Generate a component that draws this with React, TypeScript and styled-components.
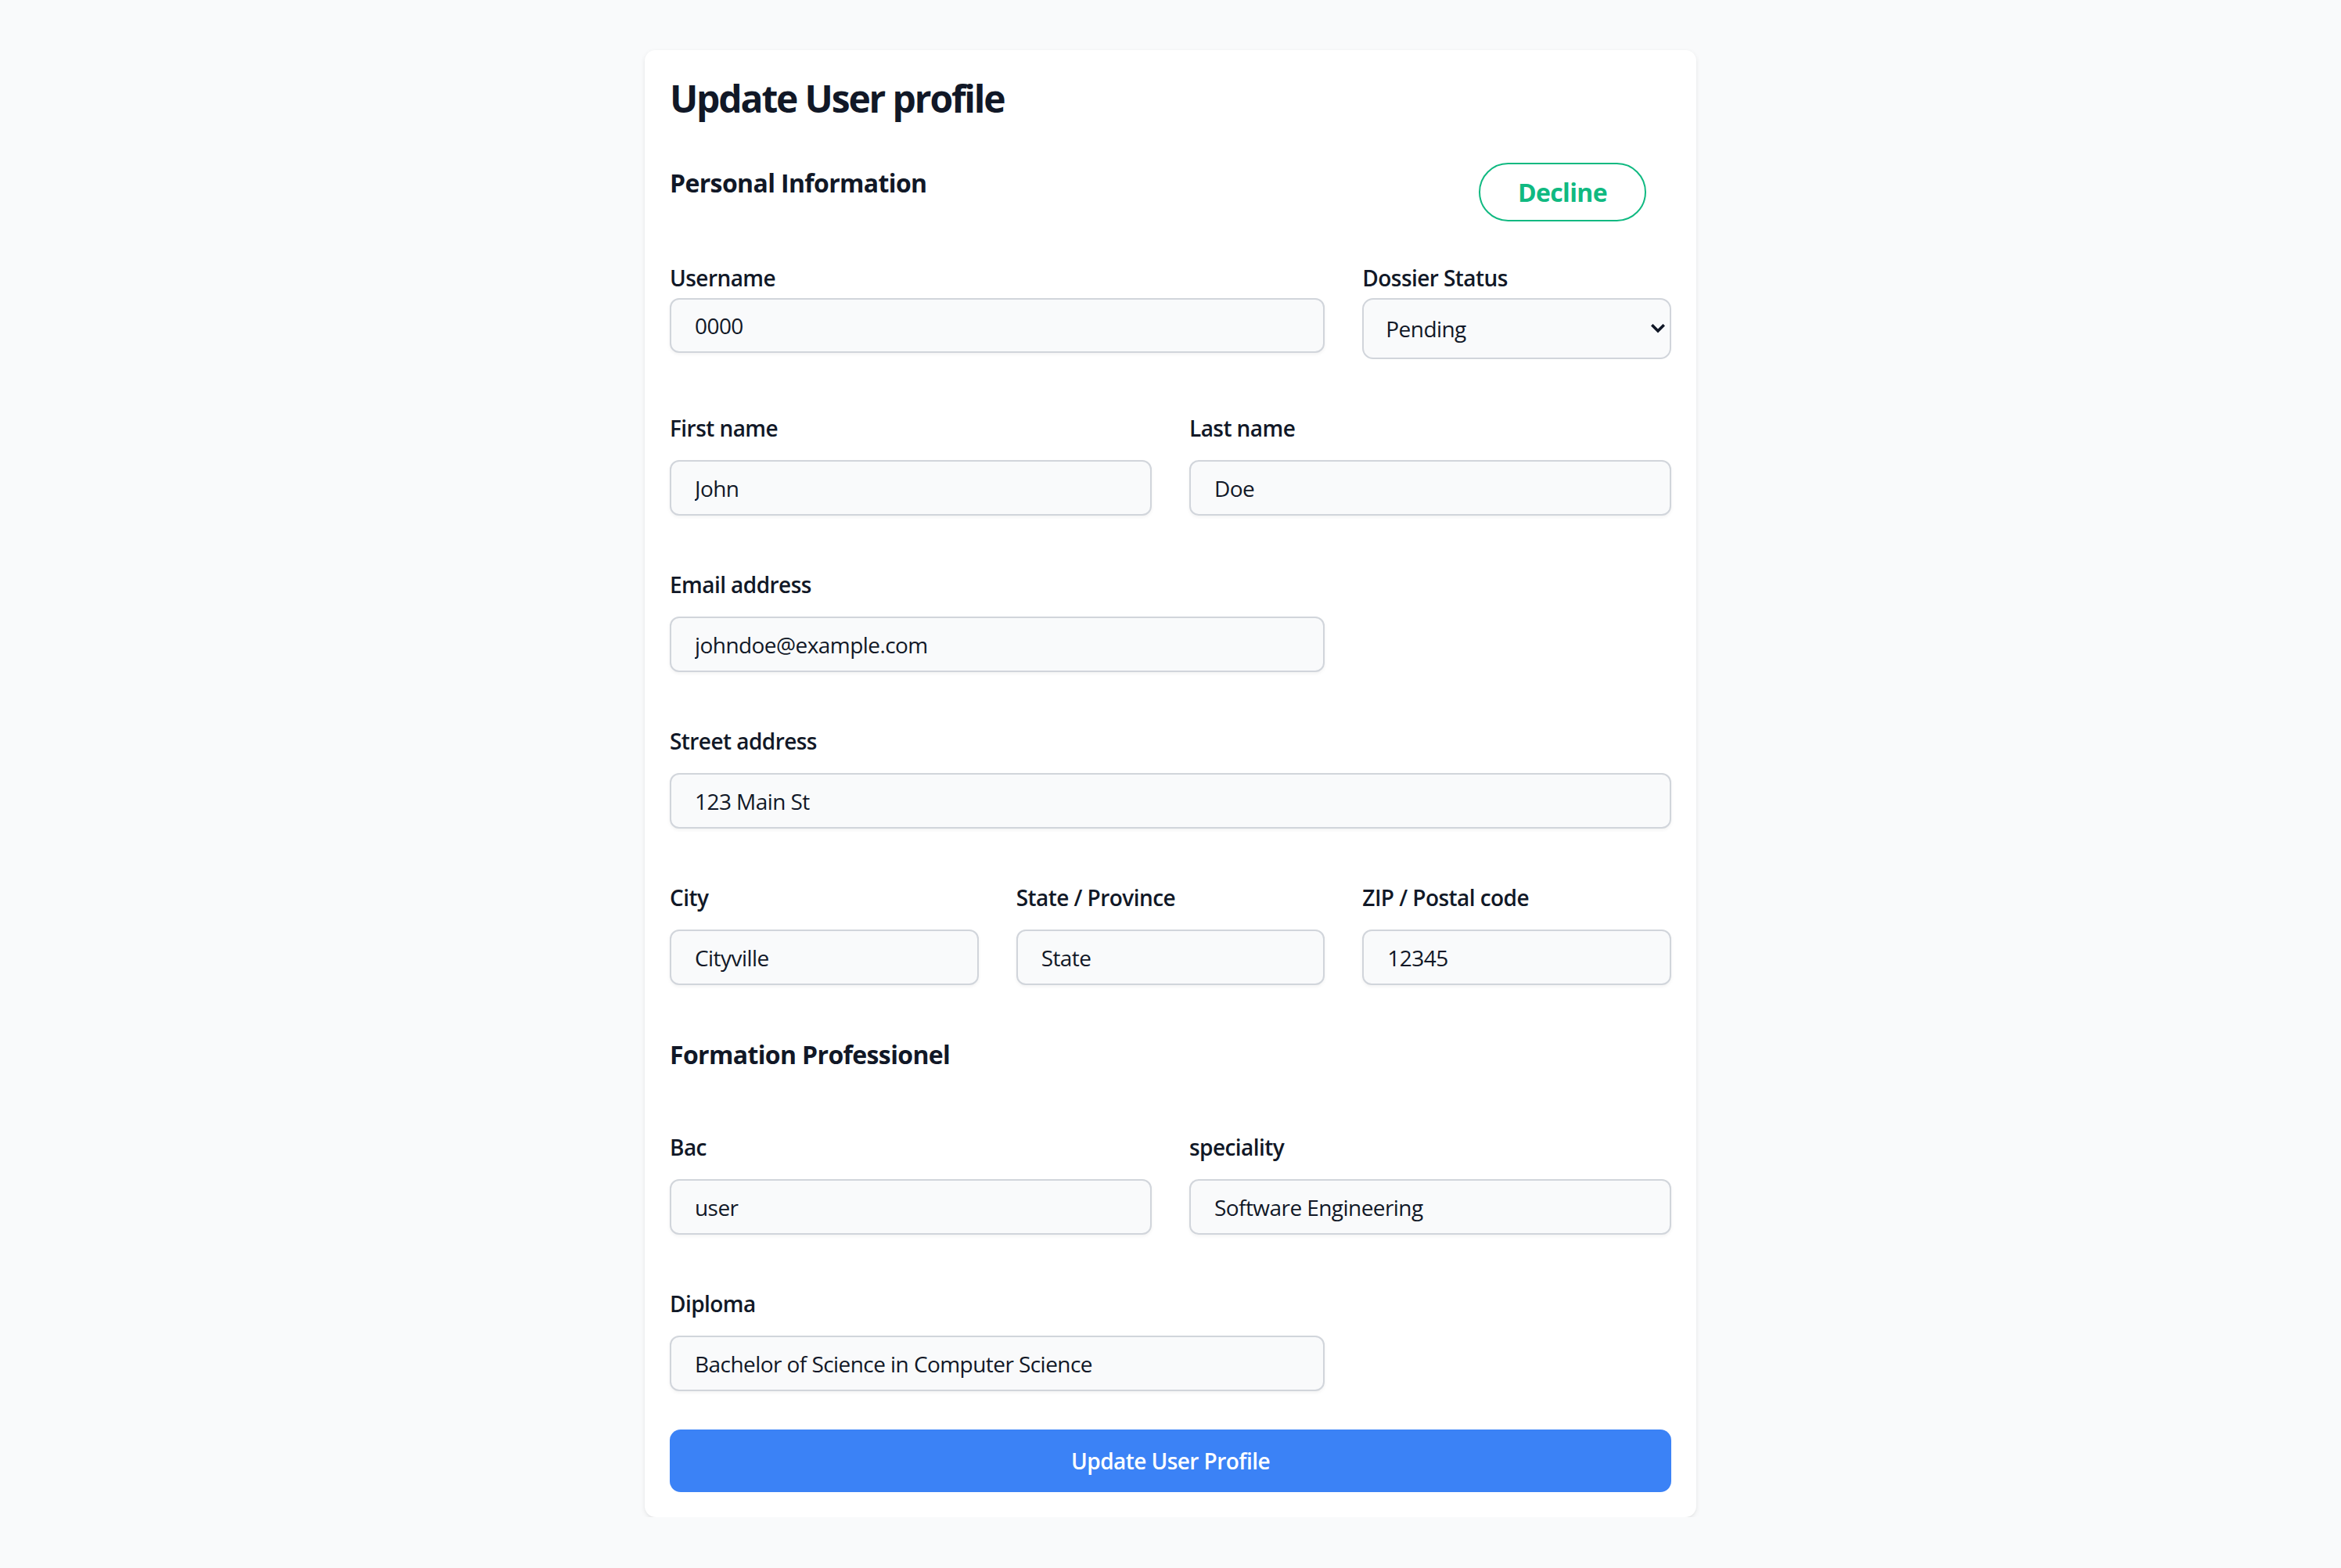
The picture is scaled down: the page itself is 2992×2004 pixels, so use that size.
import React from "react";
import styled, { createGlobalStyle } from "styled-components";

const GlobalStyle = createGlobalStyle`
  html, body {
    margin: 0;
    padding: 0;
    background: #f9fafb;
  }
  body {
    font-family: "Open Sans", "Noto Sans", sans-serif;
    color: #111827;
    -webkit-font-smoothing: antialiased;
  }
  *, *::before, *::after {
    box-sizing: border-box;
  }
`;

const Page = styled.main`
  padding-top: 64px;
  display: flex;
  justify-content: center;
  align-items: flex-start;
`;

const Card = styled.form`
  width: 1344px;
  background: #ffffff;
  border-radius: 14px;
  box-shadow: 0 2px 6px rgba(0, 0, 0, 0.08), 0 2px 4px -2px rgba(0, 0, 0, 0.08);
  padding: 32px 32px 32px;
  display: flex;
  flex-direction: column;
`;

const Title = styled.h1`
  margin: 2px 0 0;
  font-size: 48px;
  line-height: 56px;
  font-weight: 700;
  letter-spacing: -0.045em;
  color: #111827;
`;

const HeaderRow = styled.div`
  display: flex;
  justify-content: space-between;
  align-items: flex-start;
  margin-top: 52px;
`;

const SectionTitle = styled.h2<{ $mt?: number }>`
  margin: ${(p) => p.$mt ?? 0}px 0 0;
  font-size: 32px;
  line-height: 56px;
  font-weight: 700;
  letter-spacing: -0.02em;
  color: #111827;
`;

const DeclineButton = styled.button`
  margin: 2px 32px 0 0;
  width: 214px;
  height: 75px;
  border: 2px solid #10b981;
  border-radius: 999px;
  background: #ffffff;
  color: #10b981;
  font-family: "Open Sans", sans-serif;
  font-size: 32px;
  font-weight: 700;
  letter-spacing: -0.02em;
  cursor: pointer;
`;

const Grid = styled.div<{ $mt: number }>`
  display: grid;
  grid-template-columns: repeat(6, minmax(0, 1fr));
  column-gap: 48px;
  row-gap: 64px;
  margin-top: ${(p) => p.$mt}px;
`;

const Field = styled.div<{ $span: number }>`
  grid-column: span ${(p) => p.$span};
  display: flex;
  flex-direction: column;
`;

const Label = styled.label<{ $gap: number }>`
  font-size: 28px;
  line-height: 48px;
  font-weight: 600;
  letter-spacing: -0.02em;
  color: #111827;
  margin-bottom: ${(p) => p.$gap}px;
`;

const TextInput = styled.input<{ $h: number }>`
  width: 100%;
  height: ${(p) => p.$h}px;
  padding: 0 28px 0 30px;
  border: 2px solid #d1d5db;
  border-radius: 12px;
  background: #f9fafb;
  font-family: "Open Sans", sans-serif;
  font-size: 28px;
  font-weight: 400;
  letter-spacing: -0.02em;
  color: #111827;
  box-shadow: 0 2px 4px rgba(0, 0, 0, 0.05);
  outline: none;
`;

const SelectWrap = styled.div`
  position: relative;
  width: 100%;
`;

const Select = styled.select`
  appearance: none;
  -webkit-appearance: none;
  width: 100%;
  height: 78px;
  padding: 0 60px 0 28px;
  border: 2px solid #d1d5db;
  border-radius: 14px;
  background: #f9fafb;
  font-family: "Open Sans", sans-serif;
  font-size: 28px;
  letter-spacing: -0.02em;
  color: #111827;
  outline: none;
`;

const Chevron = styled.svg`
  position: absolute;
  right: 8px;
  top: 50%;
  width: 18px;
  height: 12px;
  transform: translateY(-50%);
  pointer-events: none;
`;

const SubmitButton = styled.button`
  margin-top: 49px;
  width: 100%;
  height: 80px;
  border: none;
  border-radius: 14px;
  background: #3b82f6;
  color: #ffffff;
  font-family: "Open Sans", sans-serif;
  font-size: 28px;
  font-weight: 600;
  letter-spacing: -0.02em;
  cursor: pointer;
`;

type InputField = { id: string; label: string; value: string; span: number };

const personal: InputField[] = [
  { id: "first", label: "First name", value: "John", span: 3 },
  { id: "last", label: "Last name", value: "Doe", span: 3 },
  { id: "email", label: "Email address", value: "johndoe@example.com", span: 4 },
  { id: "street", label: "Street address", value: "123 Main St", span: 6 },
  { id: "city", label: "City", value: "Cityville", span: 2 },
  { id: "state", label: "State / Province", value: "State", span: 2 },
  { id: "zip", label: "ZIP / Postal code", value: "12345", span: 2 },
];

const formation: InputField[] = [
  { id: "bac", label: "Bac", value: "user", span: 3 },
  { id: "speciality", label: "speciality", value: "Software Engineering", span: 3 },
  { id: "diploma", label: "Diploma", value: "Bachelor of Science in Computer Science", span: 4 },
];

const renderField = (f: InputField) => (
  <Field key={f.id} $span={f.span}>
    <Label htmlFor={f.id} $gap={17}>
      {f.label}
    </Label>
    <TextInput id={f.id} $h={71} defaultValue={f.value} />
  </Field>
);

export default function App() {
  return (
    <>
      <GlobalStyle />
      <Page>
        <Card onSubmit={(e) => e.preventDefault()}>
          <Title>Update User profile</Title>
          <HeaderRow>
            <SectionTitle>Personal Information</SectionTitle>
            <DeclineButton type="button">Decline</DeclineButton>
          </HeaderRow>
          <Grid $mt={48}>
            <Field $span={4}>
              <Label htmlFor="username" $gap={2}>
                Username
              </Label>
              <TextInput id="username" $h={70} defaultValue="0000" />
            </Field>
            <Field $span={2}>
              <Label htmlFor="status" $gap={2}>
                Dossier Status
              </Label>
              <SelectWrap>
                <Select id="status" defaultValue="Pending">
                  <option>Pending</option>
                  <option>Accepted</option>
                  <option>Declined</option>
                </Select>
                <Chevron viewBox="0 0 18 12" aria-hidden="true">
                  <path
                    d="M2.5 2.5 L9 9 L15.5 2.5"
                    fill="none"
                    stroke="#111827"
                    strokeWidth="3.6"
                    strokeLinecap="square"
                  />
                </Chevron>
              </SelectWrap>
            </Field>
            {personal.map(renderField)}
          </Grid>
          <SectionTitle $mt={61}>Formation Professionel</SectionTitle>
          <Grid $mt={66}>{formation.map(renderField)}</Grid>
          <SubmitButton type="submit">Update User Profile</SubmitButton>
        </Card>
      </Page>
    </>
  );
}
